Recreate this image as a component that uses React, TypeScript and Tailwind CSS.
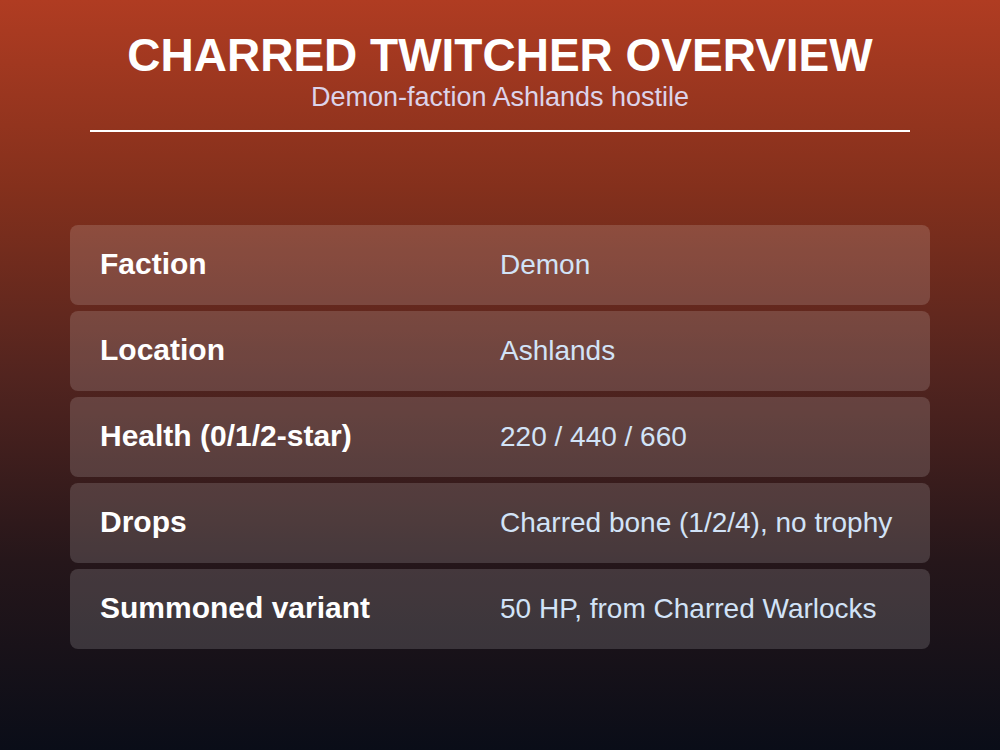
import React from "react";

const rows: [string, string][] = [
  ["Faction", "Demon"],
  ["Location", "Ashlands"],
  ["Health (0/1/2-star)", "220 / 440 / 660"],
  ["Drops", "Charred bone (1/2/4), no trophy"],
  ["Summoned variant", "50 HP, from Charred Warlocks"],
];

export default function App() {
  return (
    <div
      className="w-[1000px] h-[750px] overflow-hidden flex flex-col items-center bg-[linear-gradient(to_bottom,#b03c22,#84301c_25%,#52241f_50%,#25161a_75%,#0a0d18)]"
      style={{ fontFamily: '"Liberation Sans", Arial, sans-serif' }}
    >
      <h1 className="mt-[32px] text-[46px] leading-[46px] font-bold text-white">
        CHARRED TWITCHER OVERVIEW
      </h1>
      <p className="mt-[6px] text-[27px] leading-[27px] text-[#dcd3ea]">
        Demon-faction Ashlands hostile
      </p>
      <div className="mt-[19px] w-[820px] h-[2px] bg-white" />
      <div className="mt-[93px] w-[860px] flex flex-col gap-[6px]">
        {rows.map(([k, v]) => (
          <div
            key={k}
            className="h-[80px] rounded-[8px] bg-white/[0.15] px-[30px] pb-[3px] grid grid-cols-[400px_1fr] items-center"
          >
            <span className="text-[30px] leading-[30px] font-bold text-white">{k}</span>
            <span className="pt-[3px] text-[28px] leading-[30px] text-[#d2e3f7]">{v}</span>
          </div>
        ))}
      </div>
    </div>
  );
}
